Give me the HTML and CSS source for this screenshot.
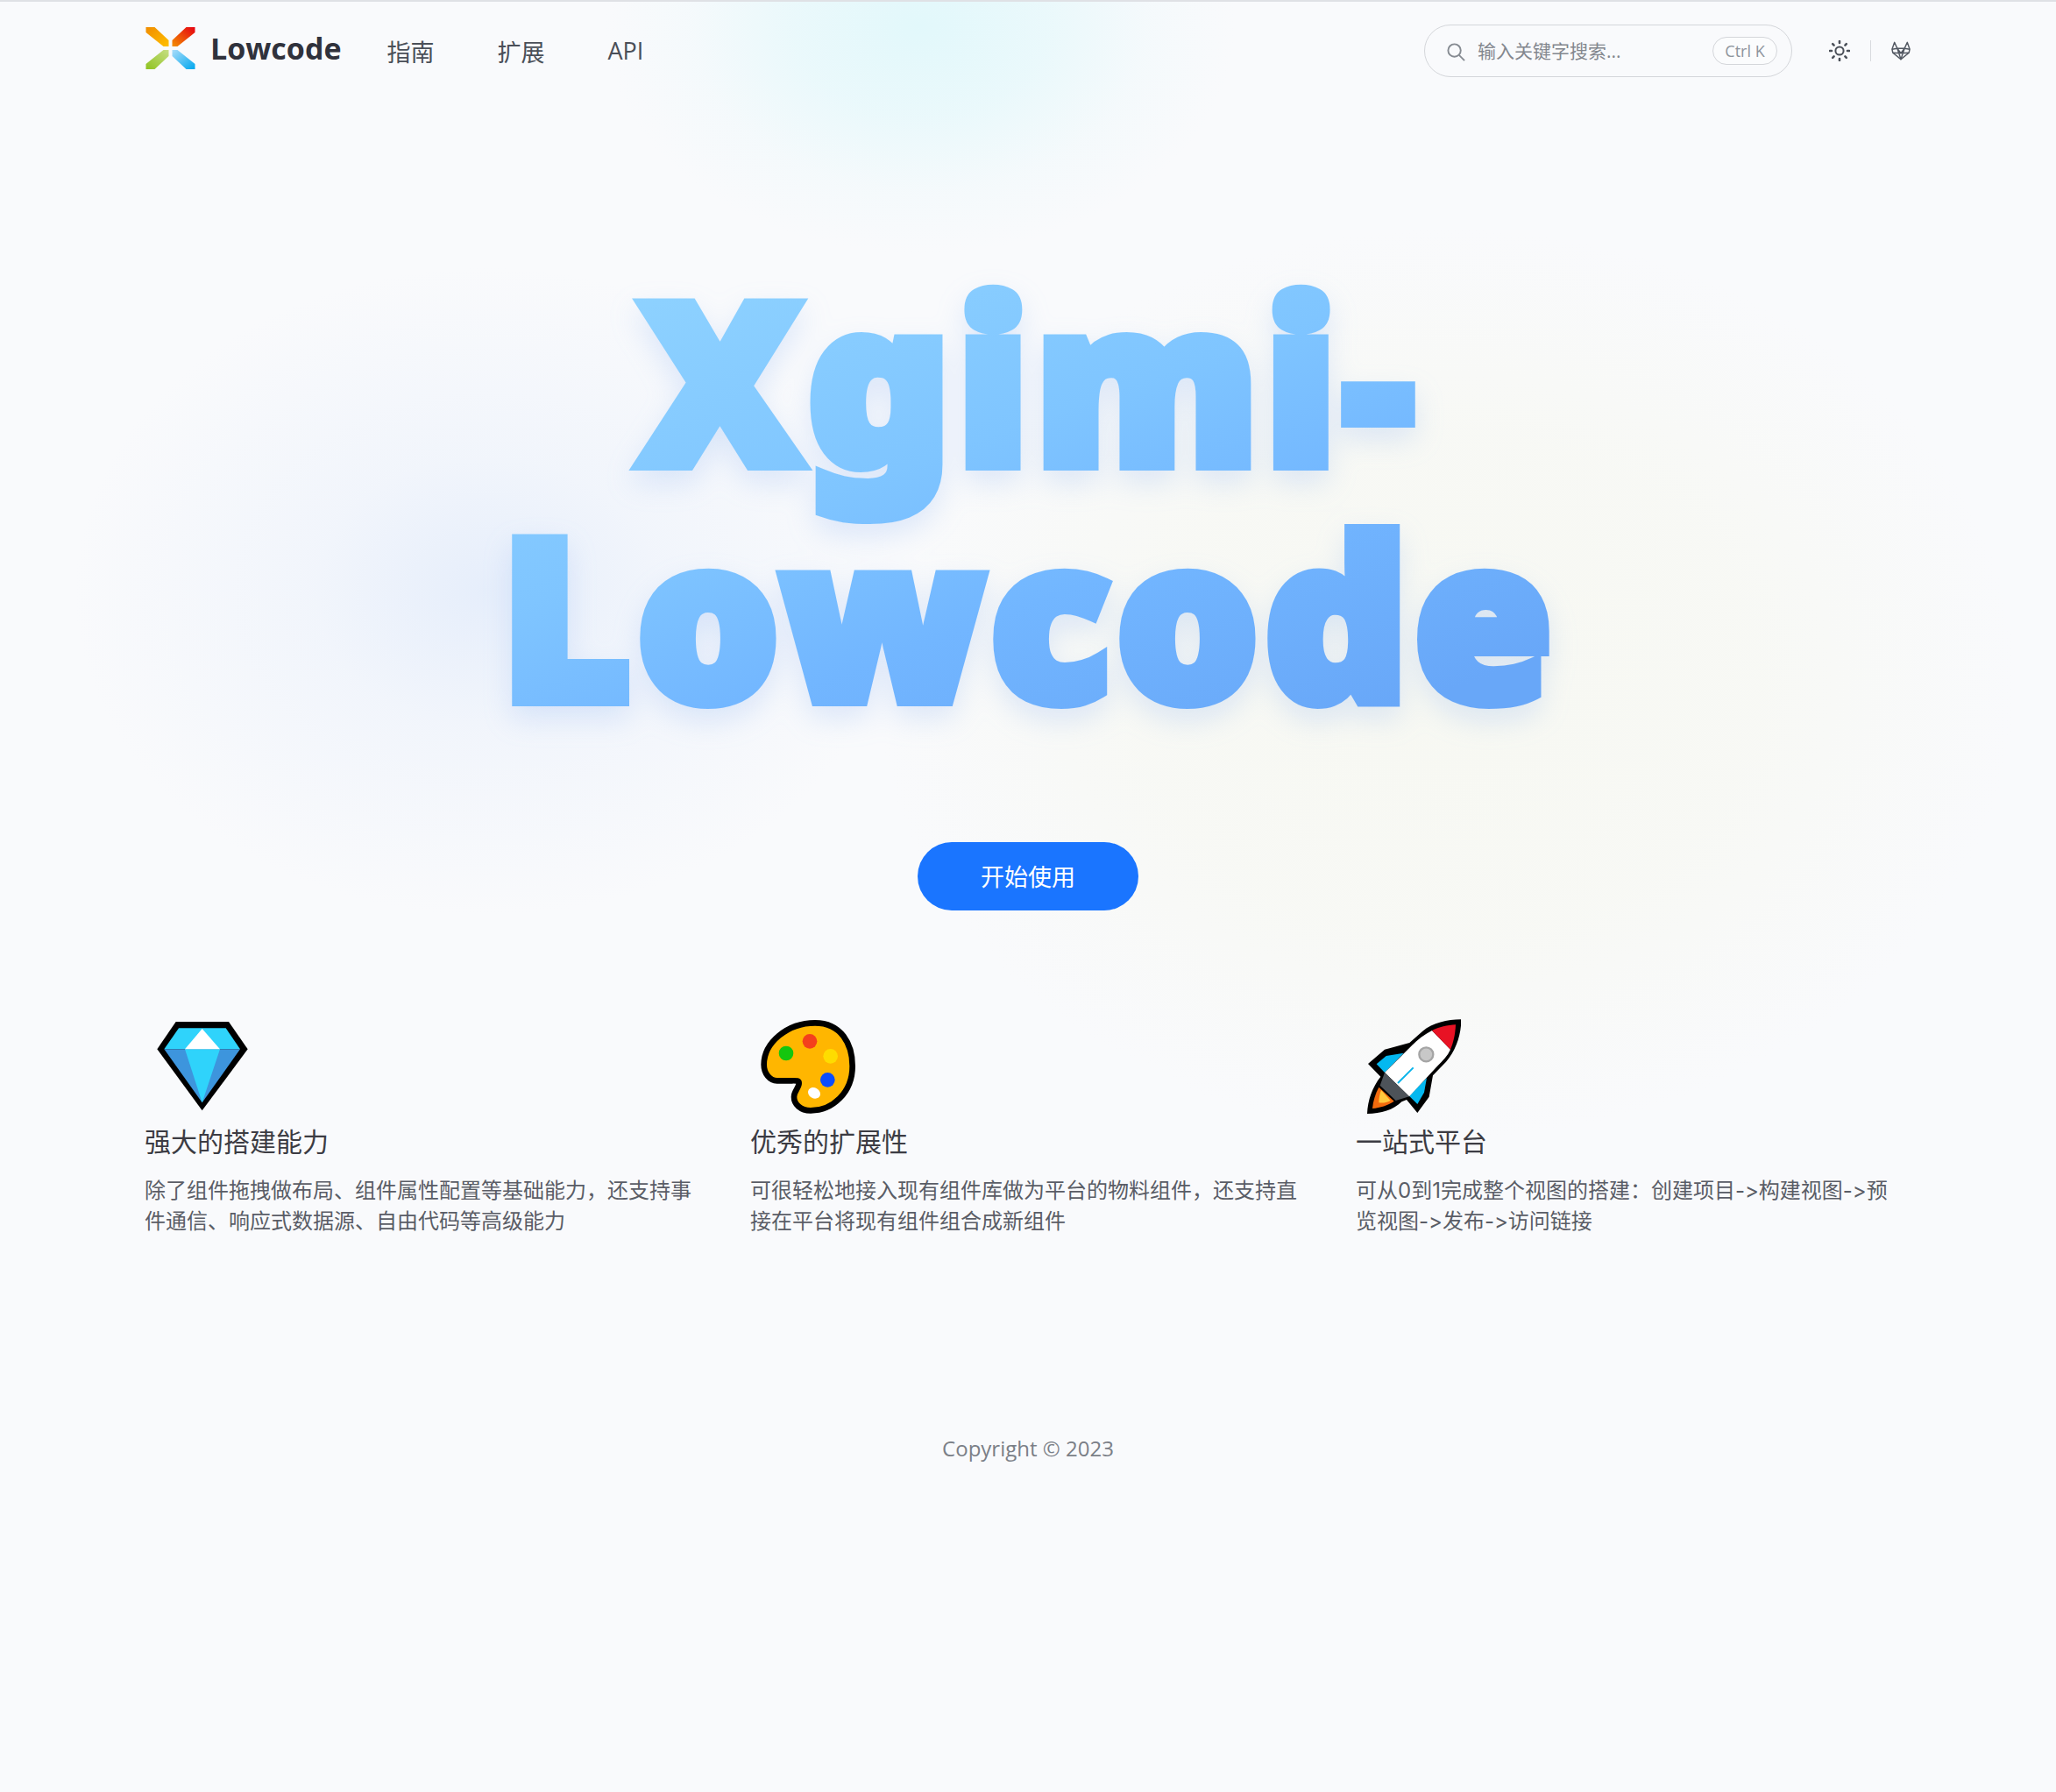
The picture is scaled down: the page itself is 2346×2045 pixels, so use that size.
FILE: index.html
```html
<!DOCTYPE html>
<html>
	<head>
		<meta charset="UTF-8">
		<title>Xgimi-Lowcode</title>
		<link rel="stylesheet" href="styles.css">
	</head>
	<body>
		<header class="nav">
			<a class="brand">
				<svg class="brand-logo" viewBox="0 0 56 48">
					<defs>
						<linearGradient id="lgTl" x1="0" y1="0" x2="1" y2="1"><stop offset="0" stop-color="#f08c00"/><stop offset="1" stop-color="#ffc000"/></linearGradient>
						<linearGradient id="lgTr" x1="1" y1="0" x2="0" y2="1"><stop offset="0" stop-color="#e60012"/><stop offset="1" stop-color="#f39000"/></linearGradient>
						<linearGradient id="lgBl" x1="0" y1="1" x2="1" y2="0"><stop offset="0" stop-color="#8fc31f"/><stop offset="1" stop-color="#c6de84"/></linearGradient>
						<linearGradient id="lgBr" x1="1" y1="1" x2="0" y2="0"><stop offset="0" stop-color="#00a7ee"/><stop offset="1" stop-color="#a8dcfa"/></linearGradient>
					</defs>
					<polygon points="0,0 10,0 26,15 26,22 20,22 0,6" fill="url(#lgTl)"/>
					<polygon points="56,0 46,0 30,15 30,22 36,22 56,6" fill="url(#lgTr)"/>
					<polygon points="0,48 10,48 26,33 26,26 20,26 0,42" fill="url(#lgBl)"/>
					<polygon points="56,48 46,48 30,33 30,26 36,26 56,42" fill="url(#lgBr)"/>
				</svg>
				<span class="brand-name">Lowcode</span>
			</a>
			<nav class="menu">
				<a>指南</a>
				<a>扩展</a>
				<a>API</a>
			</nav>
			<div class="search">
				<svg class="search-icon" viewBox="0 0 24 24"><circle cx="10" cy="10" r="7.5"/><line x1="15.5" y1="15.5" x2="22" y2="22"/></svg>
				<span class="search-text">输入关键字搜索...</span>
				<span class="search-key">Ctrl K</span>
			</div>
			<svg class="sun" viewBox="0 0 24 24">
				<circle cx="12" cy="12" r="4.6"/>
				<g class="sun-rays">
					<line x1="12" y1="1" x2="12" y2="3"/>
					<line x1="12" y1="21" x2="12" y2="23"/>
					<line x1="1" y1="12" x2="3" y2="12"/>
					<line x1="21" y1="12" x2="23" y2="12"/>
					<line x1="4.2" y1="4.2" x2="5.6" y2="5.6"/>
					<line x1="18.4" y1="18.4" x2="19.8" y2="19.8"/>
					<line x1="4.2" y1="19.8" x2="5.6" y2="18.4"/>
					<line x1="18.4" y1="5.6" x2="19.8" y2="4.2"/>
				</g>
			</svg>
			<span class="nav-line"></span>
			<svg class="gitlab" viewBox="0 0 24 24">
				<path d="M12 22.5 L2 14.5 L1 10 L4 1.5 L7.5 9 H16.5 L20 1.5 L23 10 L22 14.5 Z"/>
				<path d="M1 10 L7.5 9 L12 22.5 L16.5 9 L23 10 M7.5 9 L12 15 L16.5 9 M2 14.5 L12 15 L22 14.5"/>
			</svg>
		</header>

		<section class="hero">
			<h1 class="hero-title">Xgimi-<br>Lowcode</h1>
			<a class="hero-btn">开始使用</a>
		</section>

		<section class="features">
			<div class="feature">
				<svg class="feature-icon" viewBox="15 30 360 345">
					<polygon points="122,48 303,48 368,142 212,352 58,142" fill="#000"/>
					<polygon points="132,70 293,70 342,142 82,142" fill="#2fd3fb"/>
					<polygon points="82,142 342,142 212,325" fill="#3d95dd"/>
					<polygon points="153,142 273,142 212,325" fill="#2fd3fb"/>
					<polygon points="212,72 273,142 153,142" fill="#fff"/>
				</svg>
				<h2>强大的搭建能力</h2>
				<p>除了组件拖拽做布局、组件属性配置等基础能力，还支持事件通信、响应式数据源、自由代码等高级能力</p>
			</div>
			<div class="feature">
				<svg class="feature-icon" viewBox="18 30 360 345">
					<path d="M240 52 C330 52 368 125 368 200 C368 290 300 352 225 352 C190 352 168 330 168 305 C168 285 185 275 185 258 C185 248 175 250 150 250 L110 250 C85 250 65 225 65 195 C65 120 145 52 240 52 Z" fill="#ffb600" stroke="#000" stroke-width="20"/>
					<circle cx="222" cy="115" r="25" fill="#f4401c"/>
					<circle cx="141" cy="156" r="25" fill="#14c60e"/>
					<circle cx="293" cy="166" r="25" fill="#fedc00"/>
					<circle cx="283" cy="247" r="25" fill="#0b4dff"/>
					<ellipse cx="237" cy="292" rx="22" ry="18" fill="#fff" transform="rotate(30 237 292)"/>
				</svg>
				<h2>优秀的扩展性</h2>
				<p>可很轻松地接入现有组件库做为平台的物料组件，还支持直接在平台将现有组件组合成新组件</p>
			</div>
			<div class="feature">
				<svg class="feature-icon" viewBox="21 30 360 345">
					<path d="M382 40 C335 40 285 52 250 80 L205 120 L120 143 L63 192 L106 236 C78 272 62 315 60 363 C108 363 150 350 178 322 L195 315 L232 360 L272 305 L285 232 L330 185 C365 145 382 90 382 40 Z" fill="#000"/>
					<path d="M125 165 L92 193 L120 222 L185 155 Z" fill="#04b8f0"/>
					<path d="M264 240 L255 290 L232 330 L204 302 Z" fill="#04b8f0"/>
					<path d="M282 78 C255 92 232 110 214 128 L120 222 L204 304 L300 200 C320 180 335 165 345 143 Z" fill="#fff"/>
					<path d="M282 78 C305 66 335 60 363 58 C362 90 355 120 345 143 Z" fill="#e81224"/>
					<path d="M120 222 L204 304 L158 318 L104 266 Z" fill="#4d5359"/>
					<path d="M100 272 L152 320 C130 335 105 342 78 345 C80 320 88 295 100 272 Z" fill="#f26a0d"/>
					<path d="M108 282 L140 318 C125 325 115 327 100 325 C100 310 103 295 108 282 Z" fill="#ffc83d"/>
					<circle cx="262" cy="160" r="24" fill="#c8c8c8" stroke="#a5a5a5" stroke-width="7"/>
					<line x1="165" y1="258" x2="218" y2="205" stroke="#0ab4ea" stroke-width="6"/>
				</svg>
				<h2>一站式平台</h2>
				<p>可从0到1完成整个视图的搭建：创建项目-&gt;构建视图-&gt;预览视图-&gt;发布-&gt;访问链接</p>
			</div>
		</section>

		<footer class="footer">Copyright © 2023</footer>
	</body>
</html>
```
FILE: styles.css
```css
*{
	margin: 0;
	padding: 0;
	box-sizing: border-box;
}
html, body{
	min-height: 100%;
}
body{
	height: 2045px;
	overflow: hidden;
	font-family: "Open Sans", "Noto Sans CJK SC", sans-serif;
	color: #3c3c43;
	border-top: 2px solid #dfe1e5;
	background-color: #f9fafc;
	background-image:
		radial-gradient(ellipse 360px 260px at 1050px 30px, #e2f8fb 0%, rgba(226,248,251,.65) 40%, rgba(226,248,251,.2) 72%, rgba(226,248,251,0) 100%),
		radial-gradient(ellipse 470px 370px at 555px 675px, #e6eefb 0%, rgba(230,238,251,.4) 42%, rgba(230,238,251,0) 100%),
		radial-gradient(ellipse 650px 520px at 1650px 780px, #f7f8f2 0%, rgba(247,248,242,.7) 55%, rgba(247,248,242,0) 100%);
}

/* 顶部导航 */
.nav{
	display: flex;
	align-items: center;
	height: 114px;
	padding: 0 166px 0 166px;
}
.brand{
	display: flex;
	align-items: center;
	gap: 17px;
	margin-bottom: 8px;
}
.brand-logo{
	width: 57px;
	height: 48px;
}
.brand-name{
	font-size: 34px;
	font-weight: 700;
	color: #30323c;
}
.menu{
	display: flex;
	gap: 72px;
	margin-left: 52px;
	margin-bottom: 1px;
	flex: 1;
	font-size: 27px;
	color: #4a4f58;
}
.search{
	display: flex;
	align-items: center;
	width: 420px;
	height: 60px;
	padding: 0 16px 0 24px;
	border: 1.5px solid #d4d6da;
	border-radius: 30px;
	margin-bottom: 2px;
}
.search-icon{
	width: 23px;
	height: 23px;
	fill: none;
	stroke: #868b92;
	stroke-width: 2;
	margin-top: 3px;
}
.search-text{
	margin-left: 13px;
	margin-bottom: 2px;
	flex: 1;
	font-size: 21px;
	color: #83878e;
}
.search-key{
	display: block;
	width: 74px;
	height: 32px;
	line-height: 30px;
	text-align: center;
	font-size: 18px;
	color: #8e949c;
	border: 1.5px solid #d4d6da;
	border-radius: 16px;
	background-color: #fbfcfd;
}
.sun{
	width: 24px;
	height: 24px;
	margin-left: 42px;
	margin-bottom: 2px;
	fill: none;
	stroke: #4b5059;
	stroke-width: 2;
}
.sun-rays line{
	stroke-width: 2.6;
	stroke-linecap: round;
}
.nav-line{
	display: block;
	width: 1px;
	height: 24px;
	margin-left: 23px;
	margin-bottom: 2px;
	background-color: #d8dade;
}
.gitlab{
	width: 22px;
	height: 22px;
	margin-left: 23px;
	margin-bottom: 2px;
	fill: none;
	stroke: #525862;
	stroke-width: 1.6;
	stroke-linejoin: round;
}

/* 主标题 */
.hero{
	display: flex;
	flex-direction: column;
	align-items: center;
	padding-top: 180px;
}
.hero-title{
	width: 1400px;
	padding-left: 3px;
	font-family: "Noto Sans", Inter, sans-serif;
	font-size: 256px;
	font-weight: 900;
	line-height: 269px;
	letter-spacing: 6px;
	text-align: center;
	color: transparent;
	background: linear-gradient(160deg, #8ed2ff 12%, #7fc5ff 42%, #72b6ff 62%, #68a7f8 88%);
	-webkit-background-clip: text;
	background-clip: text;
	-webkit-text-stroke: 14px transparent;
	filter: drop-shadow(0 14px 16px rgba(110, 160, 240, .2));
}
.hero-btn{
	display: block;
	width: 252px;
	height: 78px;
	margin-top: 127px;
	padding-top: 1px;
	line-height: 78px;
	text-align: center;
	font-size: 27px;
	color: #fff;
	background-color: #1a75ff;
	border-radius: 39px;
}

/* 特性 */
.features{
	display: grid;
	grid-template-columns: repeat(3, 642px);
	column-gap: 49px;
	padding: 121px 0 0 165px;
}
.feature-icon{
	display: block;
	width: 120px;
	height: 115px;
}
.feature h2{
	margin-top: 7px;
	font-size: 30px;
	font-weight: 400;
	line-height: 42px;
	color: #3c3c43;
}
.feature p{
	max-width: 628px;
	margin-top: 17px;
	font-family: Inter, "Noto Sans CJK SC", sans-serif;
	font-feature-settings: "calt" 0;
	font-size: 24px;
	line-height: 35px;
	color: #5a5d66;
}

.footer{
	margin-top: 225px;
	text-align: center;
	font-size: 24px;
	line-height: 34px;
	color: #7b7f87;
}
```
